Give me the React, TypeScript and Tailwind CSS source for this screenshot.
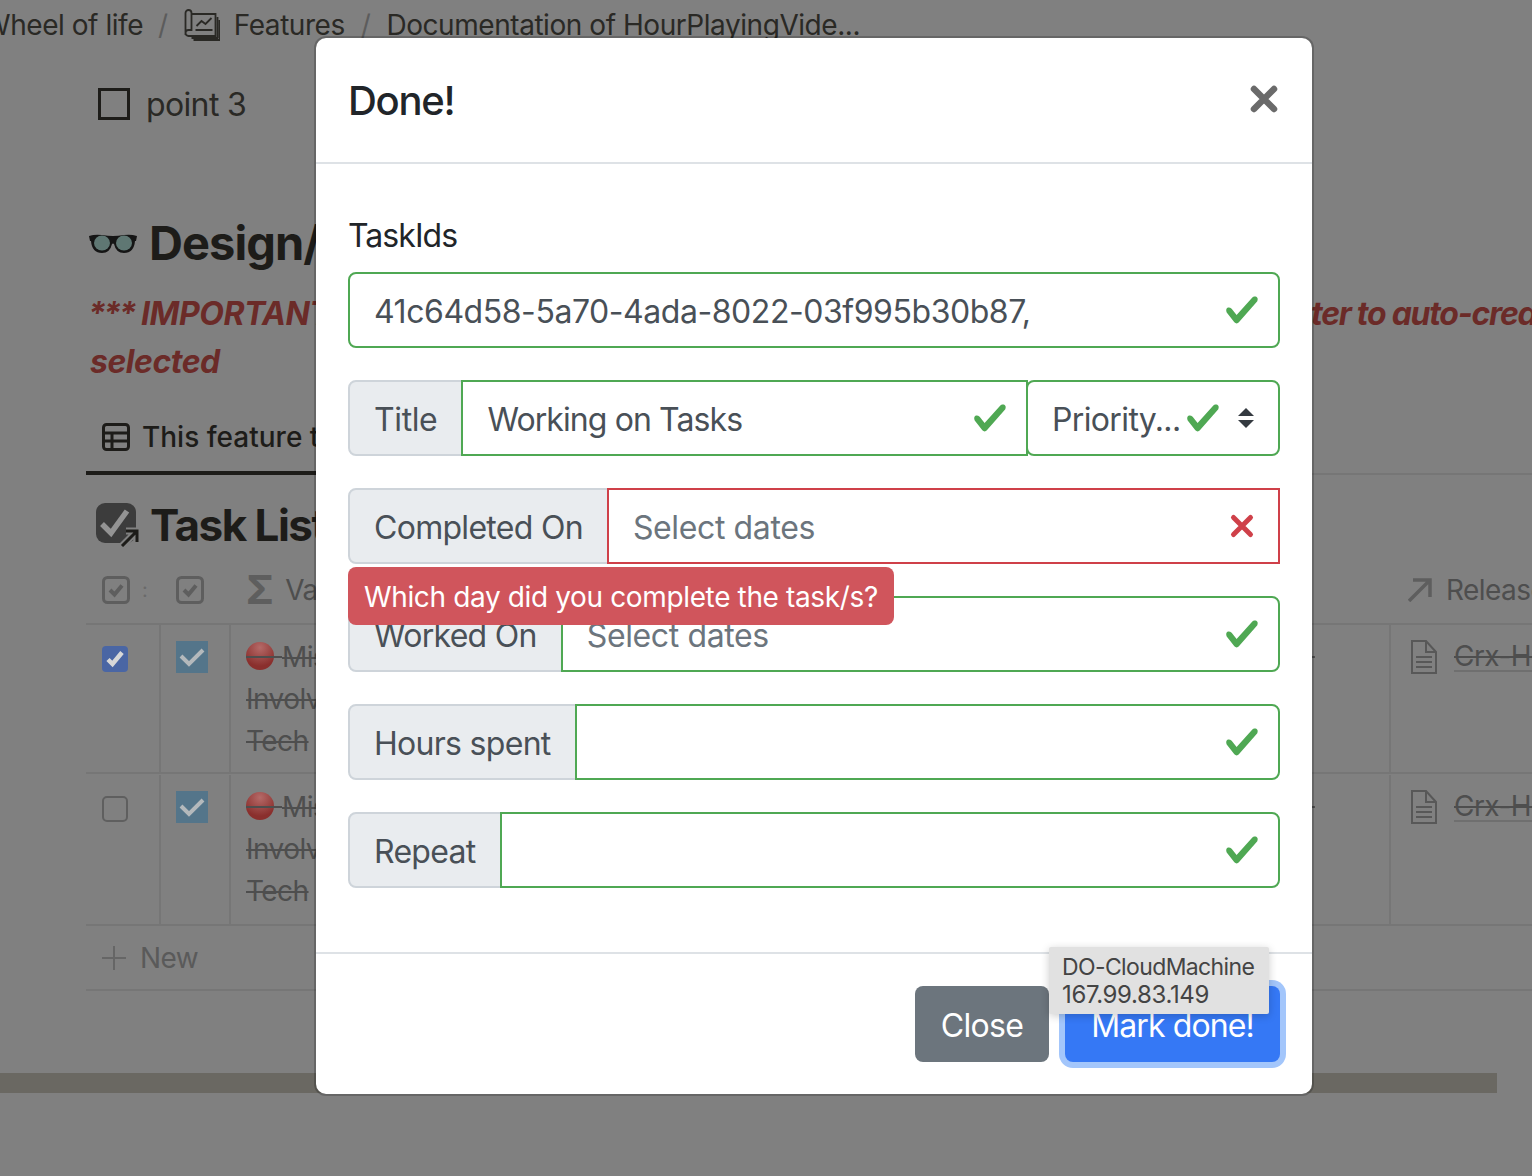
import React from "react";

const CheckIcon = () => (
  <svg viewBox="0 0 8 8" className="w-9 h-9 shrink-0" fill="#4fa853">
    <path d="M2.3 6.73L.6 4.53c-.4-1.04.46-1.4 1.1-.8l1.1 1.4 3.4-3.8c.6-.63 1.6-.27 1.2.7l-4 4.6c-.43.5-.8.4-1.1.1z" />
  </svg>
);

const CrossIcon = () => (
  <svg viewBox="0 0 36 36" className="w-9 h-9 shrink-0" stroke="#cf4049" strokeWidth="5" strokeLinecap="round">
    <path d="M9.5 9.5l17 17m0-17l-17 17" />
  </svg>
);

const SelectArrows = () => (
  <svg viewBox="0 0 4 5" className="w-4 h-5 shrink-0" fill="#343a40">
    <path d="M2 0L0 2h4zm0 5L0 3h4z" />
  </svg>
);

const Addon = ({ children }: { children: React.ReactNode }) => (
  <span className="flex items-center h-full px-6 pt-1 shrink-0 bg-[#e9ecef] border-2 border-[#ced4da] rounded-l-lg text-[#495057] tracking-[-0.022em] whitespace-nowrap">
    {children}
  </span>
);

interface FieldProps {
  label: string;
  placeholder?: string;
  invalid?: boolean;
  tooltip?: string;
}

// input-group with validation state
const Field: React.FC<FieldProps> = ({ label, placeholder, invalid, tooltip }) => (
  <div className="relative flex items-stretch h-[76px] mt-8">
    <Addon>{label}</Addon>
    <div
      className={`flex-1 flex items-center justify-between -ml-0.5 pl-6 pr-[18px] border-2 ${
        invalid ? "border-[#cf4049]" : "border-[#4fa853] rounded-r-lg"
      }`}
    >
      <span className="pt-1 text-[#6c757d]">{placeholder}</span>
      {invalid ? <CrossIcon /> : <CheckIcon />}
    </div>
    {tooltip && (
      <div className="absolute left-0 top-[79px] z-10 h-[58px] flex items-center px-4 pt-[2px] rounded-lg bg-[#d0555c] text-white text-[28px] tracking-[-0.013em] whitespace-nowrap">
        {tooltip}
      </div>
    )}
  </div>
);

const Modal = () => (
  <div className="absolute left-[314px] top-[36px] w-[1000px] h-[1060px] flex flex-col bg-white bg-clip-padding rounded-xl border-2 border-black/20 font-['Inter',sans-serif] text-[32px] tracking-[-0.012em] leading-none">
    <div className="flex items-center justify-between h-[126px] shrink-0 px-8 pt-[2px] border-b-2 border-[#dee2e6]">
      <h5 className="text-[40px] font-medium tracking-[-0.032em] text-[#212529]">Done!</h5>
      <svg viewBox="0 0 28 28" className="w-7 h-7 mr-[2px] -mt-1" stroke="#6a6a6a" strokeWidth="6.5" strokeLinecap="round">
        <path d="M4 4l20 20m0-20L4 24" />
      </svg>
    </div>

    <div className="flex-1 px-8 pt-[54px]">
      <label className="block text-[#212529] tracking-[-0.03em] leading-9">TaskIds</label>
      <div className="flex items-center justify-between h-[76px] mt-[18px] pl-6 pr-[18px] border-2 border-[#4fa853] rounded-lg">
        <span className="pt-1 text-[#495057] tracking-[-0.014em]">41c64d58-5a70-4ada-8022-03f995b30b87,</span>
        <CheckIcon />
      </div>

      <div className="flex items-stretch h-[76px] mt-8">
        <Addon><span className="tracking-[-0.012em]">Title</span></Addon>
        <div className="flex-1 flex items-center justify-between -ml-0.5 pl-6 pr-[18px] border-2 border-[#4fa853]">
          <span className="pt-1 text-[#495057] tracking-[-0.028em]">Working on Tasks</span>
          <CheckIcon />
        </div>
        <div className="w-[254px] flex items-center -ml-0.5 pl-6 pr-6 border-2 border-[#4fa853] rounded-lg">
          <span className="pt-1 text-[#495057] tracking-[-0.02em]">Priority...</span>
          <span className="ml-1"><CheckIcon /></span>
          <span className="ml-auto"><SelectArrows /></span>
        </div>
      </div>

      <Field label="Completed On" placeholder="Select dates" invalid tooltip="Which day did you complete the task/s?" />
      <Field label="Worked On" placeholder="Select dates" />
      <Field label="Hours spent" />
      <Field label="Repeat" />
    </div>

    <div className="relative flex items-center justify-end gap-4 h-[142px] shrink-0 px-8 border-t-2 border-[#dee2e6]">
      <button className="h-[76px] w-[134px] pt-1 rounded-lg bg-[#6c757d] text-white tracking-[-0.02em]">Close</button>
      <button className="h-[76px] w-[215px] pt-1 rounded-lg bg-[#3578f5] text-white tracking-[-0.028em] ring-[6px] ring-[#a3c6fb]">Mark done!</button>
      <div className="absolute right-[43px] top-[-7px] w-[220px] h-[67px] flex flex-col justify-center pl-[13px] bg-[#e1e1e1] text-[#444444] text-[24px] leading-[28px] tracking-[-0.015em] whitespace-nowrap shadow-[0_2px_8px_rgba(0,0,0,0.2)] rounded-[2px]">
        <span className="text-[23px] tracking-[-0.027em]">DO-CloudMachine</span>
        <span>167.99.83.149</span>
      </div>
    </div>
  </div>
);

const SmallCheck = ({ className }: { className: string }) => (
  <svg viewBox="0 0 28 28" className={className} fill="none">
    <rect x="1.5" y="1.5" width="25" height="25" rx="4" stroke="#5e5e5e" strokeWidth="3" />
    <path d="M8 14l4.5 4.5L20 9.5" stroke="#5e5e5e" strokeWidth="4" />
  </svg>
);

const DocIcon = () => (
  <svg viewBox="0 0 26 34" className="w-[26px] h-[34px] shrink-0" fill="none" stroke="#585858" strokeWidth="2">
    <path d="M1 1h14l10 11v21H1z" />
    <path d="M15 1v11h10M5 17h16M5 22h16M5 27h16" />
  </svg>
);

const Row = ({ checked, last }: { checked?: boolean; last?: boolean }) => (
  <div className={`grid grid-cols-[73px_70px_1fr_143px] border-b-2 border-[#767676] ${last ? "h-[152px] pt-px" : "h-[149px]"}`}>
    <div className="pl-4 pt-[21px]">
      {checked ? (
        <div className="w-[26px] h-[26px] rounded-[4px] bg-[#4a66a4] flex items-center justify-center">
          <svg viewBox="0 0 26 26" className="w-[26px] h-[26px]" fill="none" stroke="#d8d8d8" strokeWidth="4.5"><path d="M6 13.5l4.5 4.5L20 6.5" /></svg>
        </div>
      ) : (
        <div className="w-[26px] h-[26px] rounded-[5px] border-2 border-[#5f5f5f]" />
      )}
    </div>
    <div className="pl-[15px] pt-4 border-l-2 border-[#767676]">
      <div className="w-8 h-8 bg-[#54758a] flex items-center justify-center">
        <svg viewBox="0 0 32 32" className="w-8 h-8" fill="none" stroke="#b4b9bc" strokeWidth="4"><path d="M5 15l8 8L27 9" /></svg>
      </div>
    </div>
    <div className="relative pl-[15px] pt-[11px] border-l-2 border-[#767676] text-[28px] leading-[42px] tracking-[-0.02em] text-[#4e4e4e] line-through">
      <div className="relative flex items-center gap-2 whitespace-nowrap">
        <span className="w-7 h-7 -mt-[2px] rounded-full bg-[radial-gradient(circle_at_50%_20%,#b56a68,#8a2f2d_70%)] shrink-0" />
        <span className="absolute left-0 w-9 top-[20px] h-[2px] bg-[#4e4e4e]" />
        <span>Missing</span>
      </div>
      <div>Involves</div>
      <div>Tech</div>
      <span className="absolute right-[74px] top-[31px] w-[3px] h-[2px] bg-[#4e4e4e]" />
    </div>
    <div className="pl-[20px] pt-[15px] border-l-2 border-[#767676] flex items-start gap-[17px] text-[28px] tracking-[-0.02em] text-[#4e4e4e] whitespace-nowrap overflow-hidden">
      <DocIcon />
      <span className="block mt-[2px] leading-[28px] line-through border-b-2 border-[#6f6f6f]">Crx-Helper</span>
    </div>
  </div>
);

export default function App() {
  return (
    <div className="relative w-[1532px] h-[1176px] overflow-hidden bg-[#808080] font-['Inter',sans-serif] text-[#1d1c19]">
      {/* Page behind the dialog */}
      <nav className="flex items-center h-[50px] -ml-[17px] text-[28px] tracking-[-0.016em] whitespace-nowrap text-[#2a2925]">
        <span>Wheel of life</span>
        <span className="ml-[15px] text-[#5c5c5c]">/</span>
        <svg viewBox="0 0 36 32" className="w-[37px] h-8 ml-[15px]" fill="none" stroke="#2a2925" strokeWidth="1.8">
          <path d="M2 26V4a3 3 0 0 1 6 0v1h24v22H5a3 3 0 0 1-3-3 3 3 0 0 1 3-3h3V5" />
          <path d="M13 17l5-5 4 3 6-6M12 21h17M34 8v21H8M36 11v20H10" />
        </svg>
        <span className="ml-[14px]">Features</span>
        <span className="ml-[16px] text-[#5c5c5c]">/</span>
        <span className="ml-[16px]">Documentation of HourPlayingVide...</span>
      </nav>

      <div className="pl-[86px]">
        <div className="flex items-center gap-4 h-10 mt-[34px] pl-3 text-[32px] tracking-[-0.02em] text-[#2a2925]">
          <div className="w-8 h-8 border-[3px] border-[#1d1c19]" />
          <span className="pt-[2px]">point 3</span>
        </div>

        <div className="flex items-center gap-3 h-14 mt-[91px] pl-[3px] text-[47px] font-bold tracking-[-0.02em]">
          <svg viewBox="0 0 48 24" className="w-12 h-6 shrink-0">
            <path d="M0 5q6-2 13-1 6 1 11 1t11-1q7-1 13 1l-1 5h-1q-1 12-11 12-8 0-10-9-1-1-2 0-2 9-10 9-10 0-11-12H1z" fill="#151515" />
            <ellipse cx="13" cy="12" rx="8" ry="7.5" fill="#5f7773" />
            <ellipse cx="35" cy="12" rx="8" ry="7.5" fill="#5f7773" />
          </svg>
          <span className="w-[170px] overflow-hidden whitespace-nowrap">Design/Dev</span>
        </div>

        <div className="mt-[19px] pl-1 text-[32px] leading-[48px] font-bold italic tracking-[-0.015em] text-[#6b2b28]">
          <div className="flex justify-between whitespace-nowrap">
            <span className="-ml-[2px]"><span className="tracking-[-0.08em]">***</span> IMPORTANT</span>
            <span className="w-[221px] overflow-hidden tracking-[-0.04em]">ter to auto-create</span>
          </div>
          <div>selected</div>
        </div>

        <div className="flex items-center justify-between h-[89px] border-b-2 border-[#767676]">
          <div className="flex items-center gap-3 h-[89px] w-[400px] pt-4 pl-4 border-b-4 border-[#1d1c19] translate-y-[1px] text-[28px] font-medium whitespace-nowrap">
            <svg viewBox="0 0 28 28" className="w-7 h-7 shrink-0" fill="none" stroke="#1d1c19" strokeWidth="3">
              <rect x="1.5" y="1.5" width="25" height="25" rx="3" />
              <path d="M1.5 10h25M1.5 18h25M10 10v16" />
            </svg>
            <span>This feature tracks</span>
          </div>
        </div>

        <div className="flex items-center gap-[10px] h-[50px] mt-[25px] pl-[10px] text-[44px] font-bold tracking-[-0.035em] whitespace-nowrap">
          <svg viewBox="0 0 44 44" className="w-11 h-11 shrink-0">
            <rect x="0" y="0" width="40" height="40" rx="9" fill="#3c3c3c" />
            <path d="M6 21l9 9L31 8" fill="none" stroke="#939393" strokeWidth="5.5" />
            <path d="M26 43l14-14m-10-1h11v11" fill="none" stroke="#808080" strokeWidth="7" />
            <path d="M26 43l14-14m-10-1h11v11" fill="none" stroke="#1d1c19" strokeWidth="3" />
          </svg>
          <span>Task List</span>
        </div>

        <div className="grid grid-cols-[73px_70px_1fr_143px] h-[75px] pt-[6px] items-center border-b-2 border-[#767676] text-[28px] tracking-[-0.02em] text-[#4e4e4e]">
          <div className="pl-4 flex items-center gap-[12px]">
            <SmallCheck className="w-7 h-7" />
            <span className="text-[#6a6a6a] text-[20px]">:</span>
          </div>
          <div className="pl-[17px]"><SmallCheck className="w-7 h-7" /></div>
          <div className="pl-[17px] flex items-center gap-3">
            <span className="text-[40px] font-bold leading-none text-[#5e5e5e]">Σ</span>
            <span>Value</span>
          </div>
          <div className="pl-[19px] flex items-center gap-[14px] whitespace-nowrap">
            <svg viewBox="0 0 24 24" className="w-6 h-6 shrink-0" fill="none" stroke="#5e5e5e" strokeWidth="3.5"><path d="M1 23L22 2M5 2h17v17" /></svg>
            <span>Release</span>
          </div>
        </div>

        <Row checked />
        <Row last />

        <div className="flex items-center gap-[14px] h-[65px] pl-4 pt-px border-b-2 border-[#767676] text-[28px] tracking-[-0.02em] text-[#5a5a5a]">
          <svg viewBox="0 0 24 24" className="w-6 h-6" stroke="#666666" strokeWidth="2"><path d="M12 0v24M0 12h24" /></svg>
          <span>New</span>
        </div>
      </div>

      <div className="w-[1497px] h-5 mt-[82px] bg-[#6a6862]" />

      <Modal />
    </div>
  );
}
